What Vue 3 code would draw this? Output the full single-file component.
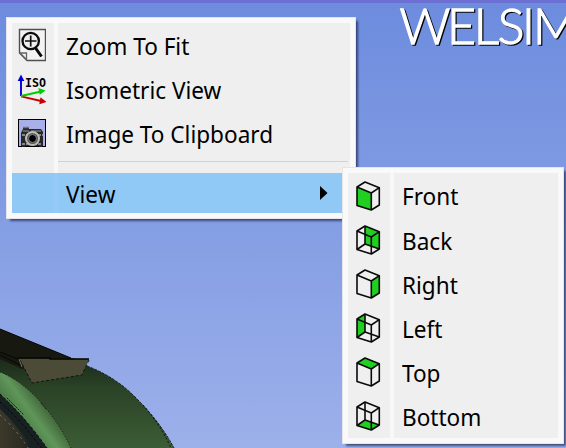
<script setup>
const mainItems = [
  { label: 'Zoom To Fit', icon: 'zoom' },
  { label: 'Isometric View', icon: 'iso' },
  { label: 'Image To Clipboard', icon: 'camera' }
]

const views = [
  { label: 'Front', face: '1,6 15.3,12 15.3,29 1,24.5' },
  { label: 'Back', face: '9,1 23.3,6.7 23.3,24 9,19', wire: true },
  { label: 'Right', face: '15.3,12 23.3,6.7 23.3,24 15.3,29' },
  { label: 'Left', face: '9,1 1,6 1,24.5 9,19', wire: true },
  { label: 'Top', face: '9,1 1,6 15.3,12 23.3,6.7' },
  { label: 'Bottom', face: '1,24.5 15.3,29 23.3,24 9,19', wire: true }
]
</script>

<template>
  <main class="viewport">
    <svg class="scene" width="566" height="448" viewBox="0 0 566 448">
      <defs>
        <linearGradient id="rim" x1="0" y1="0" x2="0" y2="1">
          <stop offset="0" stop-color="#1a2819" />
          <stop offset="0.35" stop-color="#2a4226" />
          <stop offset="1" stop-color="#3c5d35" />
        </linearGradient>
        <linearGradient id="tube" gradientUnits="userSpaceOnUse" x1="22" y1="428" x2="52" y2="406">
          <stop offset="0" stop-color="#487744" />
          <stop offset="0.45" stop-color="#60965a" />
          <stop offset="1" stop-color="#36562f" />
        </linearGradient>
        <linearGradient id="bore" x1="0" y1="0" x2="1" y2="0">
          <stop offset="0" stop-color="#3b382b" />
          <stop offset="0.6" stop-color="#302f25" />
          <stop offset="1" stop-color="#171f20" />
        </linearGradient>
      </defs>
      <path d="M0 355L60 360L87 366Q113 376 132 394Q159 420 174 448H0Z" fill="url(#rim)" />
      <path d="M87 366Q113 376 132 394Q159 420 174 448" fill="none" stroke="#101b10" stroke-dasharray="3 1" />
      <path d="M143 405Q160 424 171 448" fill="none" stroke="#081008" stroke-dasharray="2 2" />
      <path d="M0 372Q18 379 36 397Q58 420 71 448H0Z" fill="url(#tube)" />
      <path d="M0 372Q18 379 36 397Q58 420 71 448" fill="none" stroke="#10180f" stroke-dasharray="1 2" />
      <path d="M0 394Q24 416 47 448H0Z" fill="#182122" />
      <path d="M0 409Q17 425 32 448H0Z" fill="url(#bore)" />
      <path d="M0 394Q24 416 47 448M0 402Q22 421 41 448" fill="none" stroke="#050807" stroke-dasharray="3 2" />
      <path d="M0 415Q16 429 28 448" fill="none" stroke="#818064" stroke-dasharray="2 4" />
      <path d="M7 398L24 415M41 403L46 409" stroke="#132313" stroke-dasharray="2 1" />
      <path d="M0 329L71 358L88 361L22 369L0 359Z" fill="#171810" />
      <path d="M0 329L71 358" stroke="#050605" />
      <path d="M0 352L20 360M0 355L22 366" stroke="#050605" />
      <path d="M19 358L89 359L82 375L32 383Z" fill="#4b4b38" />
      <path d="M18 358L50 358L50 359L89 359" fill="none" stroke="#030403" stroke-width="1.5" />
      <path d="M89 360L82 375L32 383L20 360" fill="none" stroke="#12130d" stroke-dasharray="3 2" />
      <path d="M19 359L22 367" stroke="#77765e" />
    </svg>

    <svg class="brand" width="174" height="50" viewBox="392 0 174 50">
      <g class="brand-shadow"><text x="400.7 448.2 475 499 523.2 534.3" y="44.8">WELSIM</text></g>
      <g class="brand-face"><text x="399.5 447 473.8 497.8 522 533.1" y="43.5">WELSIM</text></g>
    </svg>

    <nav class="menu main-menu">
      <div class="menu-body">
        <div v-for="item in mainItems" :key="item.label" class="row">
          <span class="icon-cell">
            <svg v-if="item.icon === 'zoom'" width="28" height="34" viewBox="0 0 28 34">
              <path d="M1.5 1.5H27.5V32.5H9L1.5 25Z" fill="#f3f3f3" stroke="#505050" stroke-width="1.4" />
              <path d="M1.5 25H8.5V32M2 25L8.8 32" fill="none" stroke="#666" stroke-width="1.3" />
              <circle cx="12.7" cy="13" r="8.2" fill="#eee" stroke="#0b0b0b" stroke-width="2.3" />
              <path d="M7 13H18.5M12.7 7.5V18.5" stroke="#111" stroke-width="1.7" />
              <path d="M17.5 20L23.5 28.5" stroke="#080808" stroke-width="3" />
            </svg>
            <svg v-else-if="item.icon === 'iso'" width="30" height="34" viewBox="0 0 30 34">
              <path d="M4 24V7" stroke="#0000d3" stroke-width="1.9" />
              <path d="M0.7 9L4 2.5L7.3 9Z" fill="#0000d3" />
              <path d="M4 24.3L24 29" stroke="#ca0000" stroke-width="1.9" />
              <path d="M23.5 25.3L29.5 30L22.3 32.2Z" fill="#ca0000" />
              <path d="M4 24L23 19.8" stroke="#00cd00" stroke-width="1.9" />
              <path d="M21.3 16L28.5 18.4L22.8 22.7Z" fill="#00cd00" />
              <text class="iso-label" x="8" y="15.2" textLength="21" lengthAdjust="spacingAndGlyphs">ISO</text>
            </svg>
            <svg v-else width="28" height="30" viewBox="0 0 28 30">
              <rect x="0.5" y="1.5" width="27" height="27" fill="#a9b0e9" stroke="#000" />
              <path d="M3 29V15L5 11V9H11V11H23L25 14V29Z" fill="#272727" />
              <path d="M5 9.5H11M5 13H11M13 13H23" stroke="#737373" stroke-width="1.6" />
              <path d="M4 17H25M4 26H24" stroke="#858585" stroke-width="2" stroke-dasharray="3 1" />
              <circle cx="14.5" cy="20.5" r="6.5" fill="#555" stroke="#bcbcbc" stroke-width="2" />
              <circle cx="14.5" cy="20.5" r="4" fill="#000" stroke="#888" />
              <path d="M0 28.5H4M24 28.5H28M7 28.5H21" stroke="#000" />
            </svg>
          </span>
          <span class="label">{{ item.label }}</span>
        </div>
        <div class="divider"></div>
        <div class="row selected">
          <span class="icon-cell"></span>
          <span class="label">View</span>
          <svg class="arrow" width="8" height="14" viewBox="0 0 8 14"><path d="M0 0L7.5 7L0 14Z" /></svg>
        </div>
      </div>
    </nav>

    <nav class="menu sub-menu">
      <div class="menu-body">
        <div v-for="view in views" :key="view.label" class="row">
          <span class="icon-cell">
            <svg class="cube" width="25" height="30" viewBox="0 0 25 30">
              <polygon :points="view.face" fill="#20cf20" />
              <path v-if="view.wire" d="M9 1V19L1 24.5M9 19L23.3 24" />
              <path d="M9 1L1 6V24.5L15.3 29L23.3 24V6.7ZM1 6L15.3 12L23.3 6.7M15.3 12V29" />
            </svg>
          </span>
          <span class="label">{{ view.label }}</span>
        </div>
      </div>
    </nav>
  </main>
</template>

<style>
body {
  margin: 0;
  overflow: hidden;
}
</style>

<style scoped>
.viewport {
  position: relative;
  box-sizing: border-box;
  width: 566px;
  height: 448px;
  overflow: hidden;
  border-top: 3px solid #6c70d2;
  background: linear-gradient(#6d8cde, #9cb0ea);
  font-family: "Noto Sans", "Open Sans", sans-serif;
}
.scene {
  position: absolute;
  left: 0;
  top: -3px;
}
.brand {
  position: absolute;
  right: 0;
  top: -3px;
  font: 300 50px Lato, sans-serif;
}
.brand-shadow {
  fill: #000;
  stroke: #000;
  stroke-width: 1.3px;
}
.brand-face {
  fill: #fff;
  stroke: #fff;
  stroke-width: 1.3px;
}
.menu {
  position: absolute;
  box-sizing: border-box;
  padding: 5px;
  border: 1px solid #e5e5e8;
  background: #f9f9f9;
  box-shadow: 3px 3px 2px -1px rgba(20, 30, 70, 0.65);
}
.main-menu {
  left: 6px;
  top: 14px;
  width: 350px;
  height: 202px;
}
.sub-menu {
  left: 342px;
  top: 164px;
  width: 222px;
  height: 277px;
}
.menu-body {
  box-sizing: border-box;
  height: 100%;
  background: linear-gradient(90deg, #efefef 42px, #f8f8f8 42px 46px, #efefef 46px);
}
.row {
  display: flex;
  align-items: center;
  height: 44px;
}
.icon-cell {
  display: flex;
  flex: none;
  justify-content: center;
  width: 40px;
  margin-right: 14px;
}
.icon-cell svg {
  display: block;
}
.label {
  padding-top: 1px;
  font-size: 24px;
  line-height: 32px;
  color: #000;
  white-space: nowrap;
  transform: scaleX(0.94);
  transform-origin: 0 50%;
}
.sub-menu .row:first-child {
  height: 45px;
}
.sub-menu .row:first-child .label {
  padding-top: 0;
}
.divider {
  height: 2px;
  margin: 6px 2px 10px 46px;
  border-top: 1px solid #d2d2d2;
  box-sizing: border-box;
}
.selected {
  height: 40px;
  background: linear-gradient(90deg, #90c8f6 42px, #96cbf7 42px 46px, #90c8f6 46px);
}
.arrow {
  margin-left: auto;
  margin-right: 22px;
}
.cube path {
  fill: none;
  stroke: #0a0a0a;
  stroke-width: 1.6;
  stroke-linejoin: round;
}
.iso-label {
  font: bold 12px "DejaVu Sans Mono", monospace;
}
</style>
